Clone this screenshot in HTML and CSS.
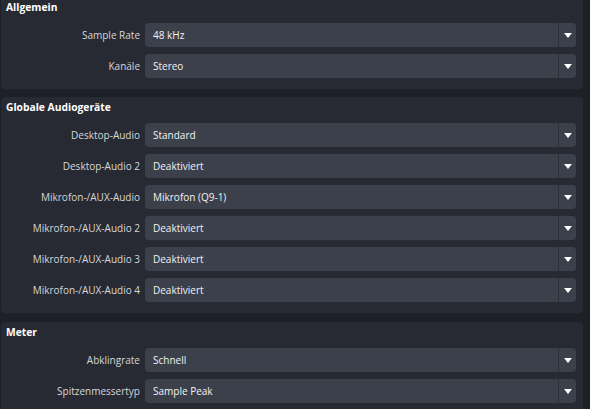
FILE: index.html
```html
<!DOCTYPE html>
<html lang="de">
<head>
    <meta charset="utf-8" />
    <meta name="viewport" content="width=device-width, initial-scale=1.0">
    <title>Audio-Einstellungen</title>
    <link rel="stylesheet" href="styles.css">
</head>
<body>
    <div class="page">
        <section class="group group-first">
            <h2 class="group-title">Allgemein</h2>
            <div class="form">
                <label>Sample Rate</label>
                <div class="combo"><span class="combo-value">48 kHz</span><span class="combo-arrow"></span></div>
                <label>Kanäle</label>
                <div class="combo"><span class="combo-value">Stereo</span><span class="combo-arrow"></span></div>
            </div>
        </section>

        <section class="group">
            <h2 class="group-title">Globale Audiogeräte</h2>
            <div class="form">
                <label>Desktop-Audio</label>
                <div class="combo"><span class="combo-value">Standard</span><span class="combo-arrow"></span></div>
                <label>Desktop-Audio 2</label>
                <div class="combo"><span class="combo-value">Deaktiviert</span><span class="combo-arrow"></span></div>
                <label>Mikrofon-/AUX-Audio</label>
                <div class="combo"><span class="combo-value">Mikrofon (Q9-1)</span><span class="combo-arrow"></span></div>
                <label>Mikrofon-/AUX-Audio 2</label>
                <div class="combo"><span class="combo-value">Deaktiviert</span><span class="combo-arrow"></span></div>
                <label>Mikrofon-/AUX-Audio 3</label>
                <div class="combo"><span class="combo-value">Deaktiviert</span><span class="combo-arrow"></span></div>
                <label>Mikrofon-/AUX-Audio 4</label>
                <div class="combo"><span class="combo-value">Deaktiviert</span><span class="combo-arrow"></span></div>
            </div>
        </section>

        <section class="group group-meter">
            <h2 class="group-title">Meter</h2>
            <div class="form">
                <label>Abklingrate</label>
                <div class="combo"><span class="combo-value">Schnell</span><span class="combo-arrow"></span></div>
                <label>Spitzenmessertyp</label>
                <div class="combo"><span class="combo-value">Sample Peak</span><span class="combo-arrow"></span></div>
            </div>
        </section>
    </div>
</body>
</html>
```

FILE: styles.css
```css
html,
body {
    margin: 0;
    height: 100%;
    overflow: hidden;
    background: #1e2027;
}
body {
    font-family: "Open Sans", "Noto Sans", sans-serif;
    font-size: 10px;
    color: #d6d7da;
}
.page {
    display: flex;
    flex-direction: column;
    gap: 8px;
    padding: 0 7px 0 1px;
}
.group {
    background: #272a33;
    border-radius: 4px;
    padding: 0 7px 11px 4px;
}
.group-first {
    margin-top: -3px;
}
.group-meter {
    margin-top: 1px;
}
.group-title {
    margin: 0 0 6px 0;
    padding-left: 1px;
    height: 20px;
    line-height: 21px;
    font-size: 10.3px;
    font-weight: bold;
    color: #ffffff;
}
.form {
    display: grid;
    grid-template-columns: 135px 1fr;
    column-gap: 5px;
    row-gap: 7px;
    align-items: center;
}
label {
    text-align: right;
    white-space: nowrap;
    line-height: 24px;
}
.combo {
    display: flex;
    height: 24px;
    background: #3c404b;
    border-radius: 4px;
    color: #f2f2f3;
}
.combo-value {
    flex: 1;
    padding-left: 8px;
    line-height: 24px;
}
.combo-arrow {
    width: 17px;
    border-left: 1px solid #2d3039;
    display: flex;
    align-items: center;
    justify-content: center;
}
.combo-arrow::after {
    content: "";
    width: 0;
    height: 0;
    border-left: 4px solid transparent;
    border-right: 4px solid transparent;
    border-top: 5px solid #ffffff;
}
```
